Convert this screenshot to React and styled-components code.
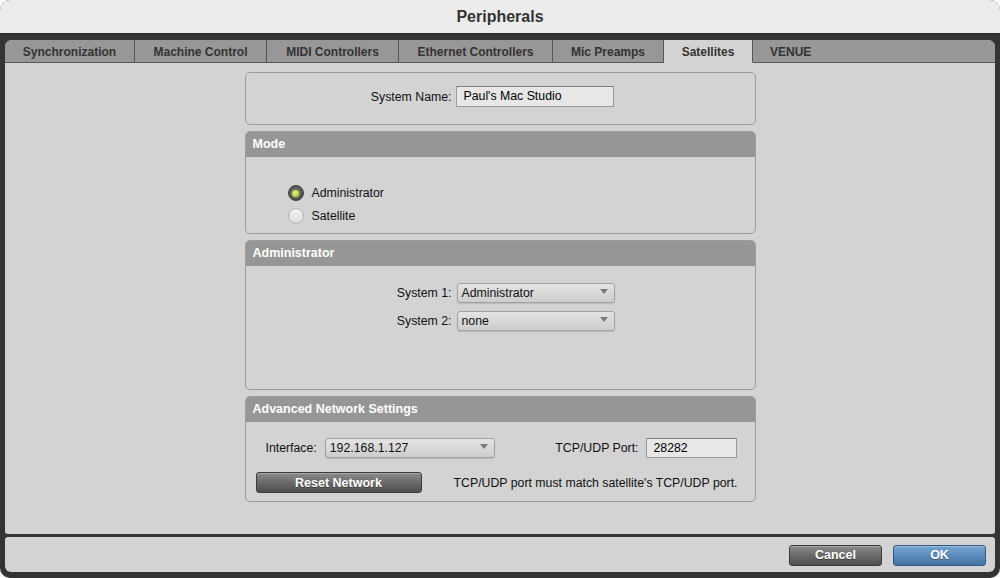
import React from "react";
import styled, { createGlobalStyle } from "styled-components";

const Global = createGlobalStyle`
  html, body { margin: 0; padding: 0; background: #ffffff; }
  body { font-family: "Liberation Sans", Arial, Helvetica, sans-serif; }
  * { box-sizing: border-box; }
`;

const Window = styled.div`
  width: 1000px;
  height: 578px;
  display: flex;
  flex-direction: column;
  background: #343434;
  border-radius: 10px;
  overflow: hidden;
`;

const TitleBar = styled.div`
  height: 34px;
  flex: none;
  background: #ececec;
  display: flex;
  align-items: center;
  justify-content: center;
  font-size: 16px;
  font-weight: bold;
  color: #333;
  border-bottom: 1px solid #2a2a2a;
`;

const Frame = styled.div`
  flex: 1;
  display: flex;
  flex-direction: column;
  padding: 6px 5px 6px 5px;
  gap: 3px;
  min-height: 0;
`;

const Sheet = styled.div`
  flex: 1;
  display: flex;
  flex-direction: column;
  background: #d3d3d3;
  border-radius: 7px 7px 3px 3px;
  overflow: hidden;
`;

const TabBar = styled.div`
  height: 23px;
  flex: none;
  display: flex;
  background: #979797;
`;

const Tab = styled.div`
  width: ${(p) => (p.$w ? `${p.$w}px` : "auto")};
  flex: ${(p) => (p.$grow ? 1 : "none")};
  display: flex;
  align-items: center;
  justify-content: ${(p) => (p.$grow ? "flex-start" : "center")};
  padding-left: ${(p) => (p.$grow ? "17px" : "0")};
  font-size: 12px;
  font-weight: bold;
  color: #333;
  background: ${(p) => (p.$active ? "#d3d3d3" : "#979797")};
  border-right: ${(p) => (p.$grow ? "none" : "1px solid #555")};
  border-bottom: ${(p) => (p.$active ? "1px solid #d3d3d3" : "1px solid #5a5a5a")};
  padding-top: 2px;
`;

const Content = styled.div`
  flex: 1;
  display: flex;
  flex-direction: column;
  align-items: center;
  padding-top: 9px;
  gap: 6px;
`;

const Panel = styled.div`
  width: 511px;
  height: ${(p) => p.$h}px;
  border: 1px solid #9c9c9c;
  border-radius: 5px;
  background: #d3d3d3;
  overflow: hidden;
  display: flex;
  flex-direction: column;
`;

const PanelHeader = styled.div`
  height: 25px;
  flex: none;
  background: #969696;
  color: #fff;
  font-weight: bold;
  font-size: 12.5px;
  display: flex;
  align-items: center;
  padding-left: 7px;
  padding-bottom: 1px;
`;

const PanelBody = styled.div`
  flex: 1;
  display: flex;
  flex-direction: column;
  padding: ${(p) => p.$pad};
  gap: ${(p) => p.$gap || 0}px;
`;

const FieldGrid = styled.div`
  display: grid;
  grid-template-columns: 206px 158px;
  column-gap: ${(p) => p.$gap || 5}px;
  row-gap: 8px;
  align-items: center;
`;

const Label = styled.span`
  font-size: 12.3px;
  color: #111;
  text-align: ${(p) => (p.$right ? "right" : "left")};
  white-space: nowrap;
`;

const TextField = styled.div`
  width: ${(p) => p.$w}px;
  height: ${(p) => p.$h || 21}px;
  background: #e7e7e7;
  border: 1px solid #9a9a9a;
  border-top-color: #7e7e7e;
  font-size: 12.3px;
  color: #000;
  padding: 2px 0 0 7px;
  white-space: nowrap;
`;

const Select = styled.div`
  width: ${(p) => p.$w}px;
  height: 20px;
  border: 1px solid #a2a2a2;
  border-radius: 3px;
  background: linear-gradient(#e4e4e4, #cdcdcd);
  box-shadow: 0 1px 1px rgba(0, 0, 0, 0.12);
  display: flex;
  justify-content: space-between;
  padding: 0 6px 0 4px;
  font-size: 12.3px;
  color: #111;
`;

const SelectText = styled.span`
  align-self: center;
  white-space: nowrap;
`;

const Arrow = styled.span`
  margin-top: 5px;
  width: 0;
  height: 0;
  border-left: 4px solid transparent;
  border-right: 4px solid transparent;
  border-top: 5px solid #7a7a7a;
`;

const RadioGroup = styled.div`
  display: flex;
  flex-direction: column;
  gap: 7px;
`;

const RadioRow = styled.div`
  display: flex;
  align-items: center;
  gap: 8px;
  font-size: 12.3px;
  color: #111;
`;

const RadioDot = styled.span`
  width: 16px;
  height: 16px;
  border-radius: 50%;
  display: flex;
  align-items: center;
  justify-content: center;
  background: ${(p) => (p.$on ? "radial-gradient(circle at 50% 40%, #6b6b6b, #454545)" : "linear-gradient(#f2f2f2, #dcdcdc)")};
  border: 1px solid ${(p) => (p.$on ? "#3c3c3c" : "#b0b0b0")};
  &::after {
    content: "";
    display: ${(p) => (p.$on ? "block" : "none")};
    width: 7px;
    height: 7px;
    border-radius: 50%;
    background: radial-gradient(circle at 45% 40%, #d8f070, #a6c832);
    box-shadow: 0 0 2px #c6e25a;
  }
`;

const Row = styled.div`
  display: flex;
  align-items: center;
  justify-content: space-between;
  padding: ${(p) => p.$pad};
`;

const Group = styled.div`
  display: flex;
  align-items: center;
  gap: ${(p) => p.$gap}px;
`;

const Button = styled.button`
  width: ${(p) => p.$w}px;
  height: 21px;
  border-radius: 3px;
  font-family: inherit;
  font-size: 12.5px;
  font-weight: bold;
  color: #fff;
  text-shadow: 0 1px 0 rgba(0, 0, 0, 0.35);
  cursor: default;
  padding: 0;
  border: 1px solid ${(p) => (p.$primary ? "#2f5a86" : "#3a3a3a")};
  background: ${(p) =>
    p.$primary
      ? "linear-gradient(#79a6d2, #5b8bbb 50%, #45719f)"
      : "linear-gradient(#8c8c8c, #6a6a6a 50%, #4f4f4f)"};
  box-shadow: inset 0 1px 0 rgba(255, 255, 255, 0.25);
`;

const Footer = styled.div`
  height: 35px;
  flex: none;
  background: #d3d3d3;
  border-radius: 3px 3px 6px 6px;
  display: flex;
  align-items: center;
  justify-content: flex-end;
  gap: 11px;
  padding: 1px 9px 0 0;
`;

const tabs = [
  { label: "Synchronization", w: 130 },
  { label: "Machine Control", w: 132 },
  { label: "MIDI Controllers", w: 132 },
  { label: "Ethernet Controllers", w: 154 },
  { label: "Mic Preamps", w: 111 },
  { label: "Satellites", w: 89, active: true },
  { label: "VENUE", grow: true },
];

function Dropdown({ w, value }) {
  return (
    <Select $w={w}>
      <SelectText>{value}</SelectText>
      <Arrow />
    </Select>
  );
}

export default function App() {
  return (
    <>
      <Global />
      <Window>
        <TitleBar>Peripherals</TitleBar>
        <Frame>
          <Sheet>
            <TabBar>
              {tabs.map((t) => (
                <Tab key={t.label} $w={t.w} $active={t.active} $grow={t.grow}>
                  {t.label}
                </Tab>
              ))}
            </TabBar>
            <Content>
              <Panel $h={53}>
                <PanelBody $pad="13px 0 0 0">
                  <FieldGrid $gap={4}>
                    <Label $right>System Name:</Label>
                    <TextField $w={158}>Paul's Mac Studio</TextField>
                  </FieldGrid>
                </PanelBody>
              </Panel>

              <Panel $h={103}>
                <PanelHeader>Mode</PanelHeader>
                <PanelBody $pad="28px 0 0 42px">
                  <RadioGroup>
                    <RadioRow>
                      <RadioDot $on />
                      Administrator
                    </RadioRow>
                    <RadioRow>
                      <RadioDot />
                      Satellite
                    </RadioRow>
                  </RadioGroup>
                </PanelBody>
              </Panel>

              <Panel $h={150}>
                <PanelHeader>Administrator</PanelHeader>
                <PanelBody $pad="17px 0 0 0">
                  <FieldGrid $gap={5}>
                    <Label $right>System 1:</Label>
                    <Dropdown w={158} value="Administrator" />
                    <Label $right>System 2:</Label>
                    <Dropdown w={158} value="none" />
                  </FieldGrid>
                </PanelBody>
              </Panel>

              <Panel $h={106}>
                <PanelHeader>Advanced Network Settings</PanelHeader>
                <PanelBody $pad="16px 0 0 0" $gap={14}>
                  <Row $pad="0 18px 0 20px">
                    <Group $gap={8}>
                      <Label>Interface:</Label>
                      <Dropdown w={170} value="192.168.1.127" />
                    </Group>
                    <Group $gap={7}>
                      <Label>TCP/UDP Port:</Label>
                      <TextField $w={91} $h={20}>28282</TextField>
                    </Group>
                  </Row>
                  <Row $pad="0 17px 0 10px">
                    <Button $w={166}>Reset Network</Button>
                    <Label>TCP/UDP port must match satellite's TCP/UDP port.</Label>
                  </Row>
                </PanelBody>
              </Panel>
            </Content>
          </Sheet>
          <Footer>
            <Button $w={93}>Cancel</Button>
            <Button $w={93} $primary>OK</Button>
          </Footer>
        </Frame>
      </Window>
    </>
  );
}
